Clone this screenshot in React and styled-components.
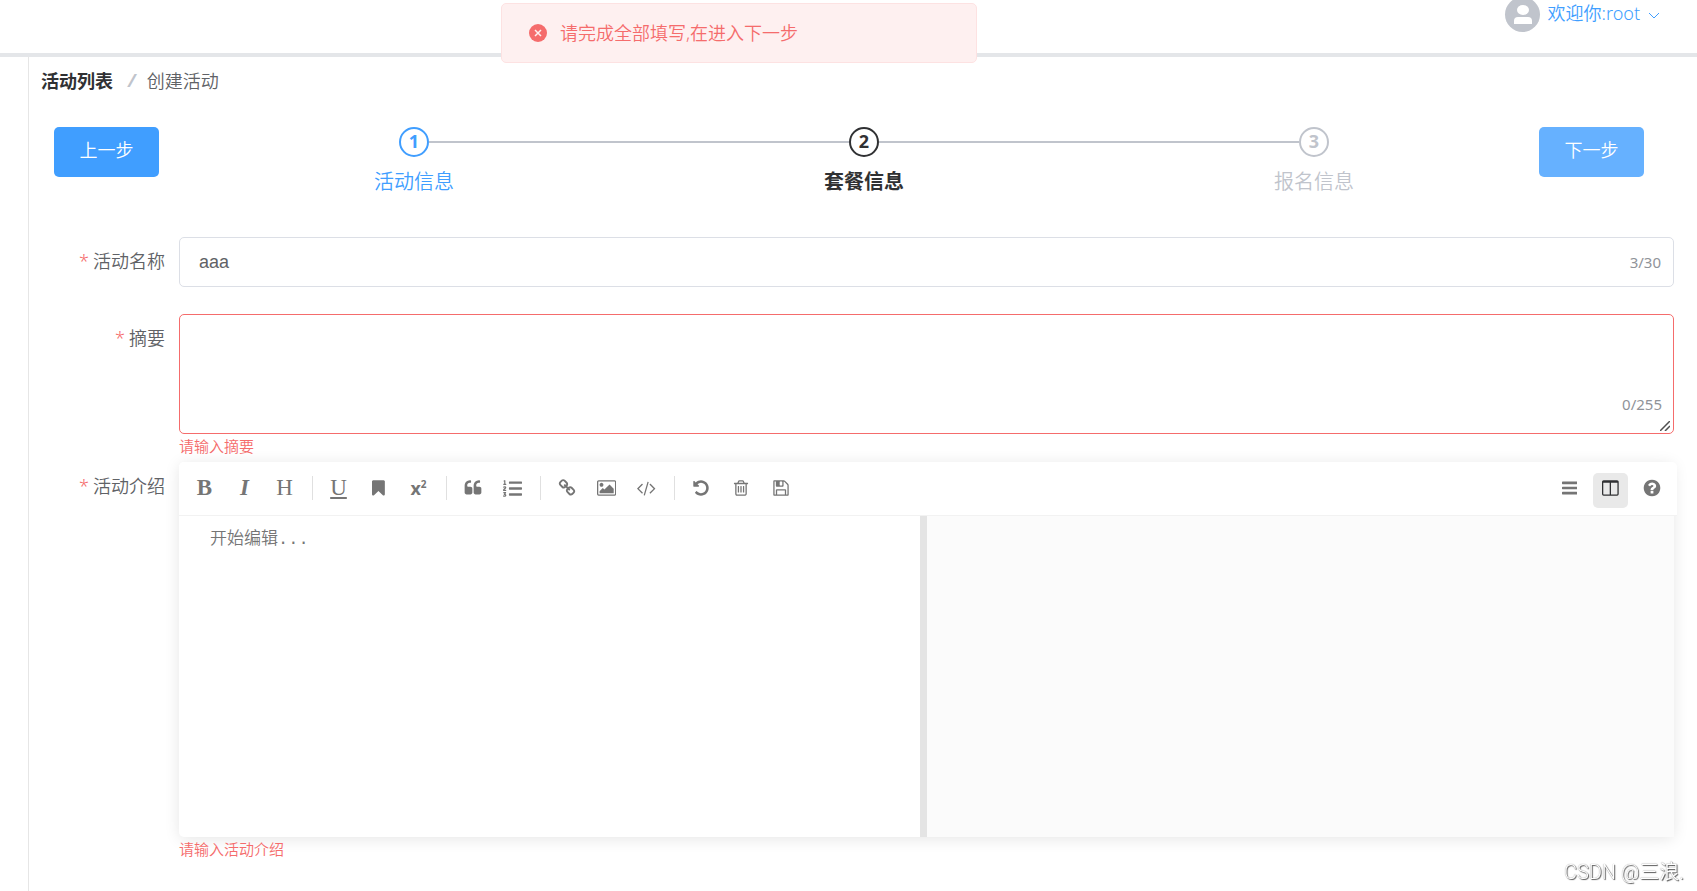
import React, { useState } from 'react'
import styled, { createGlobalStyle } from 'styled-components'
import { FaListOl } from 'react-icons/fa'

const ICONS = {
    bookmark: ['256 0 1280 1792', 'M1420 128q23 0 44 9 33 13 52.500 41t19.500 62v1289q0 34-19.500 62t-52.500 41q-19 8-44 8-48 0-83-32l-441-424-441 424q-36 33-83 33-23 0-44-9-33-13-52.500-41t-19.500-62v-1289q0-34 19.500-62t52.500-41q21-9 44-9h1048z'],
    quote: ['0 0 1792 1792', 'M832 960v384q0 80-56 136t-136 56h-384q-80 0-136-56t-56-136v-704q0-104 40.500-198.500t109.500-163.500 163.500-109.500 198.500-40.500h64q26 0 45 19t19 45v128q0 26-19 45t-45 19h-64q-106 0-181 75t-75 181v32q0 40 28 68t68 28h224q80 0 136 56t56 136zM1728 960v384q0 80-56 136t-136 56h-384q-80 0-136-56t-56-136v-704q0-104 40.500-198.500t109.500-163.500 163.500-109.500 198.500-40.500h64q26 0 45 19t19 45v128q0 26-19 45t-45 19h-64q-106 0-181 75t-75 181v32q0 40 28 68t68 28h224q80 0 136 56t56 136z'],
    link: ['0 0 1792 1792', 'M1520 1216q0-40-28-68l-208-208q-28-28-68-28-42 0-72 32 3 3 19 18.500t21.500 21.500 15 19 13 25.500 3.500 27.500q0 40-28 68t-68 28q-15 0-27.500-3.500t-25.500-13-19-15-21.500-21.500-18.500-19q-33 31-33 73 0 40 28 68l206 207q27 27 68 27 40 0 68-26l147-146q28-28 28-67zm-703-705q0-40-28-68l-206-207q-28-28-68-28-39 0-68 27l-147 146q-28 28-28 67 0 40 28 68l208 208q27 27 68 27 42 0 72-31-3-3-19-18.500t-21.500-21.500-15-19-13-25.500-3.500-27.500q0-40 28-68t68-28q15 0 27.500 3.500t25.500 13 19 15 21.500 21.500 18.500 19q33-31 33-73zm895 705q0 120-85 203l-147 146q-83 83-203 83-121 0-204-85l-206-207q-83-83-83-203 0-123 88-209l-88-88q-86 88-208 88-120 0-204-84l-208-208q-84-84-84-204t85-203l147-146q83-83 203-83 121 0 204 85l206 207q83 83 83 203 0 123-88 209l88 88q86-88 208-88 120 0 204 84l208 208q84 84 84 204z'],
    image: ['-64 0 1920 1792', 'M576 576q0 80-56 136t-136 56-136-56-56-136 56-136 136-56 136 56 56 136zm1024 384v448h-1408v-192l320-320 160 160 512-512zm96-704h-1600q-13 0-22.500 9.500t-9.500 22.500v1216q0 13 9.500 22.500t22.500 9.500h1600q13 0 22.500-9.500t9.500-22.500v-1216q0-13-9.500-22.500t-22.500-9.500zm160 32v1216q0 66-47 113t-113 47h-1600q-66 0-113-47t-47-113v-1216q0-66 47-113t113-47h1600q66 0 113 47t47 113z'],
    code: ['-20 0 1832 1792', 'M553 1399l-50 50q-10 10-23 10t-23-10l-466-466q-10-10-10-23t10-23l466-466q10-10 23-10t23 10l50 50q10 10 10 23t-10 23l-393 393 393 393q10 10 10 23t-10 23zm591-1067l-373 1291q-4 13-15.500 19.500t-23.500 2.500l-62-17q-13-4-19.500-15.500t-2.500-24.500l373-1291q4-13 15.500-19.500t23.500-2.500l62 17q13 4 19.500 15.500t2.500 24.500zm657 651l-466 466q-10 10-23 10t-23-10l-50-50q-10-10-10-23t10-23l393-393-393-393q-10-10-10-23t10-23l50-50q10-10 23-10t23 10l466 466q10 10 10 23t-10 23z'],
    undo: ['0 0 1792 1792', 'M1664 896q0 156-61 298t-164 245-245 164-298 61q-172 0-327-72.500t-264-204.500q-7-10-6.500-22.500t8.500-20.500l137-138q10-9 25-9 16 2 23 12 73 95 179 147t225 52q104 0 198.500-40.500t163.500-109.500 109.500-163.500 40.500-198.500-40.500-198.500-109.500-163.500-163.500-109.500-198.500-40.500q-98 0-188 35.500t-160 101.500l137 138q31 30 14 69-17 40-59 40h-448q-26 0-45-19t-19-45v-448q0-42 40-59 39-17 69 14l130 129q107-101 244.500-156.500t284.500-55.500q156 0 298 61t245 164 164 245 61 298z'],
    trash: ['0 0 1792 1792', 'M704 736v576q0 14-9 23t-23 9h-64q-14 0-23-9t-9-23v-576q0-14 9-23t23-9h64q14 0 23 9t9 23zm256 0v576q0 14-9 23t-23 9h-64q-14 0-23-9t-9-23v-576q0-14 9-23t23-9h64q14 0 23 9t9 23zm256 0v576q0 14-9 23t-23 9h-64q-14 0-23-9t-9-23v-576q0-14 9-23t23-9h64q14 0 23 9t9 23zm128 724v-948h-896v948q0 22 7 40.500t14.500 27 10.500 8.500h832q3 0 10.500-8.500t14.500-27 7-40.500zm-672-1076h448l-48-117q-7-9-17-11h-317q-10 2-17 11zm928 32v64q0 14-9 23t-23 9h-96v948q0 83-47 143.500t-113 60.500h-832q-66 0-113-58.500t-47-141.500v-952h-96q-14 0-23-9t-9-23v-64q0-14 9-23t23-9h309l70-167q15-37 54-63t79-26h320q40 0 79 26t54 63l70 167h309q14 0 23 9t9 23z'],
    save: ['0 0 1792 1792', 'M512 1536h768v-384h-768v384zm896 0h128v-896q0-14-10-38.500t-20-34.500l-281-281q-10-10-34-20t-39-10v416q0 40-28 68t-68 28h-576q-40 0-68-28t-28-68v-416h-128v1280h128v-416q0-40 28-68t68-28h832q40 0 68 28t28 68v416zm-384-928v-320q0-13-9.500-22.500t-22.500-9.500h-192q-13 0-22.500 9.500t-9.500 22.500v320q0 13 9.500 22.500t22.500 9.500h192q13 0 22.500-9.500t9.500-22.500zm640 32v928q0 40-28 68t-68 28h-1344q-40 0-68-28t-28-68v-1344q0-40 28-68t68-28h928q40 0 88 20t76 48l280 280q28 28 48 76t20 88z'],
    bars: ['128 0 1536 1792', 'M1664 1344v128q0 26-19 45t-45 19h-1408q-26 0-45-19t-19-45v-128q0-26 19-45t45-19h1408q26 0 45 19t19 45zm0-512v128q0 26-19 45t-45 19h-1408q-26 0-45-19t-19-45v-128q0-26 19-45t45-19h1408q26 0 45 19t19 45zm0-512v128q0 26-19 45t-45 19h-1408q-26 0-45-19t-19-45v-128q0-26 19-45t45-19h1408q26 0 45 19t19 45z'],
    columns: ['0 0 1664 1792', 'M160 1536h608v-1152h-640v1120q0 13 9.500 22.500t22.500 9.500zm1376-32v-1120h-640v1152h608q13 0 22.500-9.500t9.500-22.500zm128-1216v1216q0 66-47 113t-113 47h-1344q-66 0-113-47t-47-113v-1216q0-66 47-113t113-47h1344q66 0 113 47t47 113z'],
    help: ['64 64 1664 1664', 'M1024 1376v-192q0-14-9-23t-23-9h-192q-14 0-23 9t-9 23v192q0 14 9 23t23 9h192q14 0 23-9t9-23zm256-672q0-88-55.500-163t-138.500-116-170-41q-243 0-371 213-15 24 8 42l132 100q7 6 19 6 16 0 25-12 53-68 86-92 34-24 86-24 48 0 85.500 26t37.500 59q0 38-20 61t-68 45q-63 28-115.500 86.500t-52.500 125.500v36q0 14 9 23t23 9h192q14 0 23-9t9-23q0-19 21.500-49.500t54.500-49.500q32-18 49-28.500t46-35 44.500-48 28-60.500 12.500-81zm384 192q0 209-103 385.500t-279.500 279.500-385.500 103-385.500-103-279.500-279.500-103-385.500 103-385.500 279.500-279.500 385.500-103 385.500 103 279.500 279.500 103 385.500z'],
}

// every group is followed by a separator, except the last one
const leftTools = [
    [
        { title: '粗体', letter: 'B', look: 'bold' },
        { title: '斜体', letter: 'I', look: 'italic' },
        { title: '标题', letter: 'H' },
    ],
    [
        { title: '下划线', letter: 'U', look: 'underline' },
        { title: '标记', icon: 'bookmark' },
        { title: '上角标', sup: true },
    ],
    [
        { title: '段落引用', icon: 'quote' },
        { title: '有序列表', list: true },
    ],
    [
        { title: '链接', icon: 'link' },
        { title: '添加图片', icon: 'image' },
        { title: '代码块', icon: 'code' },
    ],
    [
        { title: '上一步', icon: 'undo' },
        { title: '清空', icon: 'trash' },
        { title: '保存', icon: 'save' },
    ],
]

const steps = [
    { title: '活动信息', status: 'finish' },
    { title: '套餐信息', status: 'process' },
    { title: '报名信息', status: 'wait' },
]

const stepColor = {
    finish: '#409eff',
    process: '#303133',
    wait: '#c0c4cc',
}

function Icon({ name }) {
    const [viewBox, d] = ICONS[name]
    return (
        <svg viewBox={viewBox} height="18" fill="currentColor" aria-hidden="true">
            <path d={d} />
        </svg>
    )
}

function Tool({ tool }) {
    return (
        <ToolButton type="button" title={tool.title} aria-label={tool.title} $active={tool.active}>
            {tool.icon && <Icon name={tool.icon} />}
            {tool.letter && <Letter $look={tool.look}>{tool.letter}</Letter>}
            {tool.sup && <SupText>x<sup>2</sup></SupText>}
            {tool.list && <FaListOl size={19} />}
        </ToolButton>
    )
}

function App() {
    const [name, setName] = useState('aaa')
    const [summary, setSummary] = useState('')
    const [intro, setIntro] = useState('')

    return (
        <>
            <GlobalStyle />
            <Header>
                <UserMenu type="button">
                    <Avatar>
                        <svg viewBox="0 0 35 35" width="35" height="35" fill="#fff" aria-hidden="true">
                            <ellipse cx="18" cy="13" rx="6" ry="5" />
                            <path d="M9 27v-3q0-4 4-4h10q4 0 4 4v3z" />
                        </svg>
                    </Avatar>
                    <span>欢迎你:root</span>
                    <svg viewBox="0 0 12 12" width="12" height="12" fill="none" stroke="currentColor" aria-hidden="true">
                        <path d="M1 4l5 5 5-5" />
                    </svg>
                </UserMenu>
            </Header>
            <Layout>
                <Aside />
                <Main>
                    <Breadcrumb aria-label="breadcrumb">
                        <a href="#list">活动列表</a>
                        <i>/</i>
                        <span>创建活动</span>
                    </Breadcrumb>
                    <StepRow>
                        <StepButton type="button">上一步</StepButton>
                        <Steps>
                            {steps.map((step, index) => (
                                <Step key={step.title} $status={step.status}>
                                    <StepHead>
                                        <Line $hidden={index === 0} />
                                        <Circle>{index + 1}</Circle>
                                        <Line $hidden={index === steps.length - 1} />
                                    </StepHead>
                                    <StepTitle>{step.title}</StepTitle>
                                </Step>
                            ))}
                        </Steps>
                        <StepButton type="button" $light>下一步</StepButton>
                    </StepRow>
                    <Form>
                        <FormItem>
                            <Label htmlFor="name">活动名称</Label>
                            <Control>
                                <InputBox>
                                    <input
                                        id="name"
                                        type="text"
                                        maxLength={30}
                                        value={name}
                                        onChange={(e) => setName(e.target.value)}
                                    />
                                    <Count>{name.length}/30</Count>
                                </InputBox>
                            </Control>
                        </FormItem>
                        <FormItem>
                            <Label htmlFor="summary">摘要</Label>
                            <Control>
                                <TextAreaBox>
                                    <textarea
                                        id="summary"
                                        maxLength={255}
                                        value={summary}
                                        onChange={(e) => setSummary(e.target.value)}
                                    />
                                    <AreaCount>{summary.length}/255</AreaCount>
                                    <Grip viewBox="0 0 10 10" width="10" height="10" aria-hidden="true">
                                        <path d="M0 10L10 0M5 10l5-5" />
                                    </Grip>
                                </TextAreaBox>
                                <ErrorText>请输入摘要</ErrorText>
                            </Control>
                        </FormItem>
                        <FormItem>
                            <Label htmlFor="intro">活动介绍</Label>
                            <Control>
                                <Editor>
                                    <Toolbar>
                                        <ToolGroup>
                                            {leftTools.map((group, index) => (
                                                <React.Fragment key={index}>
                                                    {index > 0 && <Separator />}
                                                    {group.map((tool) => <Tool key={tool.title} tool={tool} />)}
                                                </React.Fragment>
                                            ))}
                                        </ToolGroup>
                                        <ToolGroup $wide>
                                            <Tool tool={{ title: '导航目录', icon: 'bars' }} />
                                            <Tool tool={{ title: '双栏', icon: 'columns', active: true }} />
                                            <Tool tool={{ title: '帮助', icon: 'help' }} />
                                        </ToolGroup>
                                    </Toolbar>
                                    <Panes>
                                        <EditPane>
                                            <textarea
                                                id="intro"
                                                placeholder="开始编辑..."
                                                value={intro}
                                                onChange={(e) => setIntro(e.target.value)}
                                            />
                                        </EditPane>
                                        <Preview>{intro}</Preview>
                                    </Panes>
                                </Editor>
                                <ErrorText>请输入活动介绍</ErrorText>
                            </Control>
                        </FormItem>
                    </Form>
                </Main>
            </Layout>
            <Message role="alert">
                <svg viewBox="0 0 18 18" width="18" height="18" aria-hidden="true">
                    <circle cx="9" cy="9" r="9" fill="#f56c6c" />
                    <path d="M6 6l6 6M12 6l-6 6" stroke="#fef0f0" strokeWidth="1.500" />
                </svg>
                <p>请完成全部填写,在进入下一步</p>
            </Message>
            <Watermark>CSDN @三浪.</Watermark>
        </>
    )
}

const GlobalStyle = createGlobalStyle`
    * {
        box-sizing: border-box;
    }
    body {
        margin: 0;
        background: #fff;
        color: #606266;
        font-family: "Noto Sans", "Noto Sans CJK SC", sans-serif;
        font-size: 18px;
        font-weight: 350;
    }
    button, input, textarea {
        font: inherit;
    }
`

const Header = styled.header`
    display: flex;
    justify-content: flex-end;
    align-items: flex-start;
    height: 57px;
    padding-right: 37px;
    overflow: hidden;
    border-bottom: 4px solid #e4e6e9;
`

const UserMenu = styled.button`
    display: flex;
    align-items: center;
    gap: 8px;
    height: 35px;
    margin-top: -3px;
    padding: 0;
    border: none;
    background: none;
    color: #409eff;
    cursor: pointer;

    > span:nth-child(2) {
        height: 35px;
        line-height: 32px;
    }
`

const Avatar = styled.span`
    width: 35px;
    height: 35px;
    border-radius: 50%;
    background: #c0c4cc;
    overflow: hidden;

    svg {
        display: block;
    }
`

const Layout = styled.div`
    display: flex;
    min-height: calc(100vh - 57px);
`

const Aside = styled.aside`
    flex: none;
    width: 29px;
    border-right: 1px solid #e6e6e6;
`

const Main = styled.main`
    flex: 1;
    min-width: 0;
    padding: 11px 23px 12px 12px;
`

const Breadcrumb = styled.nav`
    display: flex;
    align-items: center;
    height: 24px;

    a {
        color: #303133;
        font-weight: 700;
        text-decoration: none;
    }
    i {
        margin: 0 11px 0 15px;
        color: #c0c4cc;
        font-weight: 700;
    }
`

const StepRow = styled.div`
    display: flex;
    align-items: flex-start;
    margin-top: 35px;
    padding: 0 30px 0 13px;
`

const StepButton = styled.button`
    flex: none;
    width: 105px;
    height: 50px;
    padding: 0 0 6px;
    border: none;
    border-radius: 5px;
    background: ${(props) => (props.$light ? '#66b1ff' : '#409eff')};
    color: #fff;
    cursor: pointer;
`

const Steps = styled.div`
    display: flex;
    flex: 1;
    padding-left: 30px;
`

const Step = styled.div`
    flex: 1;
    color: ${(props) => stepColor[props.$status]};
    font-weight: ${(props) => (props.$status === 'process' ? 700 : 350)};
    text-align: center;
`

const StepHead = styled.div`
    display: flex;
    align-items: center;
`

const Line = styled.div`
    flex: 1;
    height: 2px;
    background: ${(props) => (props.$hidden ? 'transparent' : '#c0c4cc')};
`

const Circle = styled.div`
    width: 30px;
    height: 30px;
    border: 2px solid currentColor;
    border-radius: 50%;
    font-weight: 700;
    line-height: 25px;
`

const StepTitle = styled.div`
    font-size: 20px;
    line-height: 50px;
`

const Form = styled.form`
    display: flex;
    flex-direction: column;
    margin-top: 30px;
`

const FormItem = styled.div`
    display: flex;
    align-items: flex-start;
`

const Label = styled.label`
    flex: none;
    width: 138px;
    padding-right: 14px;
    line-height: 49px;
    text-align: right;

    &::before {
        content: '*';
        margin-right: 4px;
        color: #f56c6c;
    }
`

const Control = styled.div`
    flex: 1;
    min-width: 0;
`

const InputBox = styled.div`
    display: flex;
    align-items: center;
    height: 50px;
    margin-bottom: 27px;
    padding: 0 12px 0 19px;
    border: 1px solid #dcdfe6;
    border-radius: 5px;

    input {
        flex: 1;
        min-width: 0;
        padding: 0;
        border: none;
        outline: none;
        color: #606266;
        font-family: "Liberation Sans", "Noto Sans CJK SC", sans-serif;
    }
`

const Count = styled.span`
    color: #909399;
    font-size: 15px;
    font-weight: 400;
`

const TextAreaBox = styled.div`
    position: relative;

    textarea {
        display: block;
        width: 100%;
        height: 120px;
        padding: 6px 19px;
        border: 1px solid #f56c6c;
        border-radius: 5px;
        outline: none;
        resize: vertical;
        color: #606266;
    }
    textarea::-webkit-resizer {
        background: transparent;
    }
`

const AreaCount = styled(Count)`
    position: absolute;
    right: 12px;
    bottom: 20px;
`

const Grip = styled.svg`
    position: absolute;
    right: 4px;
    bottom: 3px;
    stroke: #505050;
    stroke-width: 1.5;
    pointer-events: none;
`

const ErrorText = styled.div`
    height: 28px;
    color: #f56c6c;
    font-size: 15px;
    line-height: 25px;
`

const Editor = styled.div`
    border-radius: 5px;
    box-shadow: 0 2px 15px rgba(0, 0, 0, 0.1);
`

const Toolbar = styled.div`
    display: flex;
    justify-content: space-between;
    margin-right: -3px;
    padding: 11px 8px 7px;
    border-bottom: 1px solid #f2f2f2;
    border-radius: 5px 5px 0 0;
    background: #fff;
`

const ToolGroup = styled.div`
    display: flex;
    gap: ${(props) => (props.$wide ? '6px' : '5px')};
`

const ToolButton = styled.button`
    display: flex;
    align-items: center;
    justify-content: center;
    width: 35px;
    height: 35px;
    padding: 0 0 5px;
    border: none;
    border-radius: 5px;
    background: ${(props) => (props.$active ? '#e9e9e9' : 'none')};
    color: ${(props) => (props.$active ? '#303133' : '#757575')};
    cursor: pointer;
`

const Letter = styled.span`
    font-family: "Liberation Serif", serif;
    font-size: 23px;
    font-weight: ${(props) => (props.$look === 'bold' || props.$look === 'italic' ? 700 : 400)};
    font-style: ${(props) => (props.$look === 'italic' ? 'italic' : 'normal')};
    text-decoration: ${(props) => (props.$look === 'underline' ? 'underline' : 'none')};
    line-height: 24px;
`

const SupText = styled.span`
    font-weight: 700;
    line-height: 24px;

    sup {
        font-size: 10px;
        line-height: 1;
    }
`

const Separator = styled.span`
    width: 1px;
    height: 24px;
    margin: 3px 3px 0 5px;
    background: #e0e0e0;
`

const Panes = styled.div`
    display: flex;
    height: 321px;
`

const EditPane = styled.div`
    width: 50%;
    border-right: 7px solid #e4e4e4;

    textarea {
        display: block;
        width: 100%;
        height: 100%;
        padding: 10px 31px;
        border: none;
        outline: none;
        resize: none;
        background: transparent;
        font-family: "Liberation Mono", "Noto Sans CJK SC", monospace;
        font-size: 17px;
        line-height: 28px;
    }
    textarea::placeholder {
        color: #757575;
    }
`

const Preview = styled.div`
    width: 50%;
    background: #fbfbfb;
`

const Message = styled.div`
    position: fixed;
    top: 3px;
    left: 501px;
    display: flex;
    align-items: center;
    gap: 13px;
    width: 476px;
    height: 60px;
    padding: 0 27px;
    border: 1px solid #fde2e2;
    border-radius: 5px;
    background: #fef0f0;
    color: #f56c6c;

    p {
        margin: 0;
        padding-bottom: 2px;
    }
`

const Watermark = styled.div`
    position: fixed;
    right: 13px;
    bottom: 6px;
    color: #fff;
    font-family: Roboto, "Noto Sans CJK SC", sans-serif;
    font-size: 20px;
    line-height: 26px;
    text-shadow: 1px 1px 1px #555, 0 0 1px #888;
`

export default App
